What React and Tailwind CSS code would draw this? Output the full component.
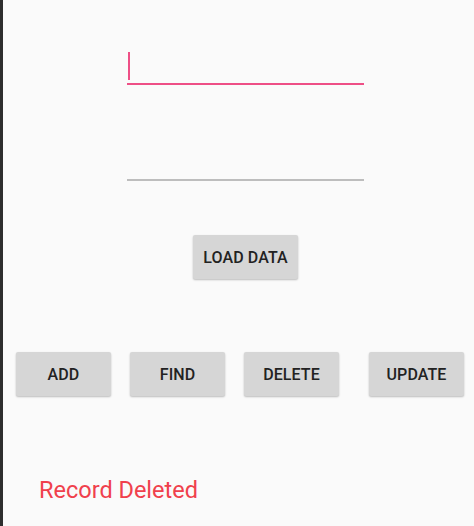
import React from 'react';

const ActionButton = ({ label, className = '' }) => (
  <button
    type="button"
    className={`h-[44px] w-[95px] shrink-0 rounded-[2px] bg-[#d6d6d6] pt-[2px] text-[16px] font-medium tracking-[0.1px] text-[#222] shadow-[0_1px_2px_rgba(0,0,0,0.25)] ${className}`}
  >
    {label}
  </button>
);

const App = () => {
  return (
    <div className="flex h-[526px] w-[474px] flex-col overflow-hidden border-l-[3px] border-[#2e2e2e] bg-[#fafafa] font-['Roboto',sans-serif]">
      {/* first input, focused */}
      <div className="ml-[124px] mt-[52px] flex h-[33px] w-[237px] items-start border-b-2 border-[#ee4f86]">
        <div className="ml-[1px] h-[28px] w-[2px] bg-[#ee4f86]" />
      </div>

      {/* second input */}
      <div className="ml-[124px] mt-[63px] h-[33px] w-[237px] border-b-2 border-[#bdbdbd]" />

      <button
        type="button"
        className="ml-[190px] mt-[54px] h-[44px] w-[105px] rounded-[2px] bg-[#d6d6d6] pt-[2px] text-[16px] font-medium tracking-[0.1px] text-[#222] shadow-[0_1px_2px_rgba(0,0,0,0.25)]"
      >
        LOAD DATA
      </button>

      <div className="mt-[73px] flex">
        <ActionButton label="ADD" className="ml-[13px]" />
        <ActionButton label="FIND" className="ml-[19px]" />
        <ActionButton label="DELETE" className="ml-[19px]" />
        <ActionButton label="UPDATE" className="ml-[30px]" />
      </div>

      <p className="ml-[36px] mt-[80px] text-[23.5px] leading-[28px] text-[#f0404c]">Record Deleted</p>
    </div>
  );
};

export default App;
